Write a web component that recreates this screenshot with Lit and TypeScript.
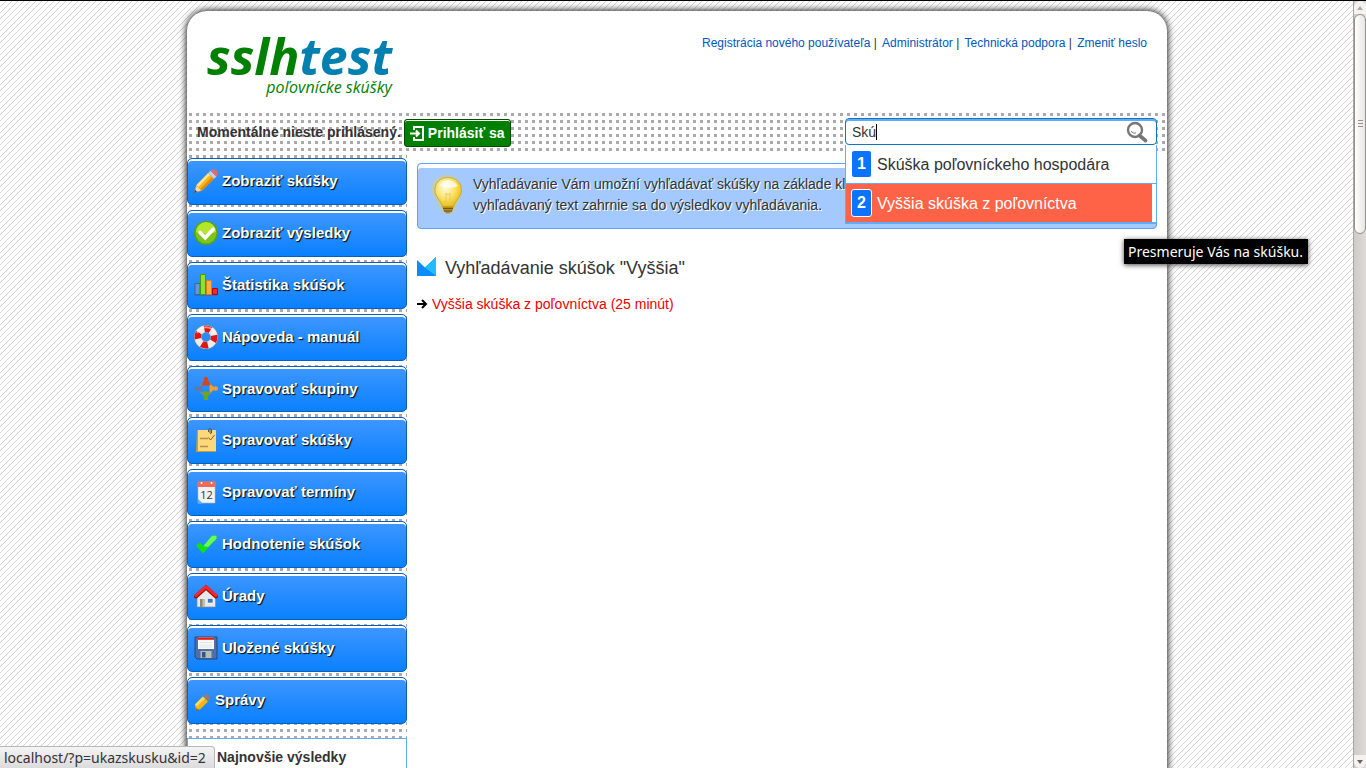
import { LitElement, html, css, svg } from "lit";
import { customElement, state } from "lit/decorators.js";

const icon = (w: number, h: number, body: unknown) =>
  html`<svg width=${w} height=${h} viewBox="0 0 ${w} ${h}" aria-hidden="true">${body}</svg>`;

const pencil = icon(24, 24, svg`
  <path d="M0 24.0 2.500 16 8 21.500z" fill="#f3d9a4" stroke="#a98a55" stroke-width=".6"/>
  <path d="M0 24l1-3.200 2.300 2.200z" fill="#444"/>
  <path d="M2.500 16 14 4.200l6 5.600L8 21.500z" fill="#ffb31a"/>
  <path d="M2.500 16 14 4.200l2 1.800L4.500 18z" fill="#ffe48a"/>
  <path d="M6.300 20 18 8l2 1.800L8 21.500z" fill="#e58a00"/>
  <path d="M14 4.200l2.500-2.400 6 5.600L20 9.800z" fill="#c9ced3"/>
  <path d="M16.500 1.800Q18.500-.5 21 .4q3 1.200 3 4 0 1.400-1.500 3z" fill="#e06a72"/>`);

const check = icon(24, 24, svg`
  <circle cx="12" cy="12" r="12" fill="#55a60a"/>
  <circle cx="12" cy="12" r="10.500" fill="#7cc61c"/>
  <path d="M2 11a10 10 0 0 1 20 0q-10 4-20 0z" fill="#b4e62e"/>
  <path d="M6 11.500l5.200 5.300 8-8.600" fill="none" stroke="#fff" stroke-width="3.600" stroke-linecap="round"/>`);

const bars = icon(24, 24, svg`
  <path d="M0 21.500h24v1H0z" fill="#3c5f99"/>
  <path d="M1 10.500h5v11H1z" fill="#6699cf" stroke="#3465a4"/>
  <path d="M6.500 1.500h5v20h-5z" fill="#8ae234" stroke="#4e9a06"/>
  <path d="M12.500 7.500h5v14h-5z" fill="#fcaf3e" stroke="#e07b1a"/>
  <path d="M18.500 15.500h5v6h-5z" fill="#ef2929" stroke="#b80000"/>`);

const buoy = icon(24, 24, svg`
  <circle cx="12" cy="12" r="8.200" fill="none" stroke="#9aa0a6" stroke-width="7.600"/>
  <circle cx="12" cy="12" r="8.200" fill="none" stroke="#ececec" stroke-width="6.600"/>
  <circle cx="12" cy="12" r="8.200" fill="none" stroke="#dc1616" stroke-width="6.600"
    stroke-dasharray="6.440 6.440" stroke-dashoffset="2"/>
  <path d="M3 8a10 10 0 0 1 18 0" fill="none" stroke="#fff" stroke-opacity=".5" stroke-width="2"/>`);

const people = icon(24, 23, svg`
  <circle cx="12" cy="11.500" r="6" fill="none" stroke="#7a8fb5" stroke-width="2"/>
  <g fill="#d4451c"><circle cx="12" cy="2" r="2.200"/><path d="M9.500 4h5l2 4-2.500.5h-4L7.500 8z"/></g>
  <g fill="#6aa51e"><circle cx="12" cy="21" r="2.200"/><path d="M9.500 19h5l2-4-2.500-.5h-4l-2.500.5z"/></g>
  <g fill="#5a7bb0"><circle cx="2.200" cy="11.500" r="2.200"/><path d="M4 10l4-2.500.5 2.500v3L8 15.500 4 13z"/></g>
  <g fill="#f0a030"><circle cx="21.800" cy="11.500" r="2.200"/><path d="M20 10l-4-2.500-.5 2.500v3l.5 2.500 4-2.500z"/></g>`);

const note = icon(24, 24, svg`
  <path d="M3 2h19v22H2z" fill="#c79a45"/>
  <path d="M4 2h18v21H4z" fill="#fbd978"/>
  <path d="M6 10.500h8M6 18.500h8" stroke="#c08a4a" stroke-width="1.500"/>
  <path d="M14.500 9.500l2 2.500 4-5" fill="none" stroke="#a8552a"/>
  <path d="M14.500 4V1.500q1.500-2 3 0V5q-1 1.500-1.500 0V2" fill="none" stroke="#555"/>`);

const calendar = icon(24, 24, svg`
  <path d="M4 2h17v21H4z" fill="#f2f2f0" stroke="#b9b9b9" stroke-width=".6"/>
  <path d="M4 1.500h17v5.500H4z" fill="#ef6a57"/>
  <circle cx="7.500" cy="3" r="1" fill="#fff"/><circle cx="17.500" cy="3" r="1" fill="#fff"/>
  <path d="M4 19v4.500h5z" fill="#5fb2e8"/>
  <text class="day" x="12.500" y="19" text-anchor="middle">12</text>`);

const tick = icon(24, 24, svg`
  <path d="M2 13.500l4-3 3.500 3.500L18 3.800h4.500v3L9 21.500z" fill="#12e012"/>
  <path d="M9.500 14 18 3.800h4.500v3L14 15z" fill="#66ff55"/>`);

const house = icon(24, 24, svg`
  <path d="M3 11 12 3l9.500 8v12H3z" fill="#e9e9e7" stroke="#8a8a88" stroke-width=".7"/>
  <path d="M6 15h5v8H6z" fill="#8b8b7c"/><path d="M8.500 15H11v8H8.500z" fill="#c0bfae"/>
  <path d="M13.500 14.500h5.500V19h-5.500z" fill="#3f78b8" stroke="#fff" stroke-width=".6"/>
  <path d="M2 12.500 12 3.500l10 9" fill="none" stroke="#a80000" stroke-width="4" stroke-linecap="round"/>
  <path d="M2 11.500 12 2.800l10 8.700" fill="none" stroke="#f02a2a" stroke-width="3" stroke-linecap="round"/>`);

const floppy = icon(24, 24, svg`
  <path d="M1 1h22v22H3l-2-2z" fill="#4e70a8" stroke="#27477d"/>
  <path d="M4 1.500h16V13H4z" fill="#fafafa"/><path d="M4 1.500h16v2.300H4z" fill="#e31b12"/>
  <path d="M5.500 6.500h13M5.500 9h13M5.500 11h13" stroke="#ddd" stroke-width=".8"/>
  <path d="M6.500 15h11v7h-11z" fill="#b9bbb6"/><path d="M8 16h3.500v5.500H8z" fill="#31548f"/>`);

const crayon = icon(17, 24, svg`
  <path d="M1 16.500 9 8.500l5 5-8 8-4.500 1z" fill="#f7b512"/>
  <path d="M1 16.500 9 8.500l2 2-8 8z" fill="#ffda62"/>
  <path d="M1 16.500q0 5 5 5l-4.500 1.500z" fill="#8b6a3a"/>
  <path d="M9 8.500l2.500-2.300q3.500-.7 4.700 3 .3 2-2.200 4.300z" fill="#8c7f80"/>`);

const bulb = icon(32, 42, svg`
  <defs><radialGradient id="glow" cx=".4" cy=".35" r=".7">
    <stop offset="0" stop-color="#fffbe0"/><stop offset=".5" stop-color="#fbe36a"/><stop offset="1" stop-color="#e8b800"/>
  </radialGradient></defs>
  <path d="M16 1C7 1 .5 7 .5 15c0 7 5 10 7 18l4 5h12c2-8 7-13 7-20C30.500 8 25 1 16 1z" fill="#c9cf8c" opacity=".65"/>
  <path d="M17 3.500C9 3.500 4 9 4 16c0 7 6 10 7.500 17h11C24 26 30.500 23 30.500 16c0-7-5.500-12.500-13.500-12.500z" fill="url(#glow)" stroke="#c9a227" stroke-width=".8"/>
  <path d="M8 12q3-6 9-6t10 6q-9 4-19 0z" fill="#fff" opacity=".7"/>
  <path d="M15 31V19l2 2 2-2v12" fill="none" stroke="#e6c870"/>
  <path d="M11.500 32.500h11l-1 4.500-3.500 2.500h-2.500L12.500 37z" fill="#b88d1e"/>
  <path d="M12 34.500h10M13 37h8" stroke="#6b5420"/>`);

interface MenuItem { label: string; art: unknown }

const MENU: MenuItem[] = [
  { label: "Zobraziť skúšky", art: pencil },
  { label: "Zobraziť výsledky", art: check },
  { label: "Štatistika skúšok", art: bars },
  { label: "Nápoveda - manuál", art: buoy },
  { label: "Spravovať skupiny", art: people },
  { label: "Spravovať skúšky", art: note },
  { label: "Spravovať termíny", art: calendar },
  { label: "Hodnotenie skúšok", art: tick },
  { label: "Úrady", art: house },
  { label: "Uložené skúšky", art: floppy },
  { label: "Správy", art: crayon },
];

const LINKS = ["Registrácia nového používateľa", "Administrátor", "Technická podpora", "Zmeniť heslo"];

@customElement("side-menu")
export class SideMenu extends LitElement {
  static styles = css`
    :host { display: block; }
    .list { display: grid; gap: 5px; margin: 0; padding: 0; list-style: none; }
    .item {
      display: flex; align-items: center; gap: 4px; padding: 10px 6px 11px;
      border: 1px solid #0a5fb8; border-radius: 5px;
      background: linear-gradient(#3f97ff, #0a80ff);
      box-shadow: inset 0 2px 0 #fff;
      color: #fff; font-size: 15px; line-height: 20px; font-weight: bold;
      text-decoration: none; text-shadow: 1px 1px 1px #000;
    }
    .day { font: normal 11px "Open Sans", sans-serif; fill: #333; text-shadow: none; }
    svg { display: block; flex: none; }
  `;
  render() {
    return html`<ul class="list">
      ${MENU.map((m) => html`<li><a class="item" href="#">${m.art}<span>${m.label}</span></a></li>`)}
    </ul>`;
  }
}

@customElement("search-box")
export class SearchBox extends LitElement {
  static styles = css`
    :host { display: block; position: relative; }
    .field {
      display: flex; align-items: center; box-sizing: border-box; height: 27px; padding: 0 8px 0 6px;
      border: 1px solid #0b78bf; border-radius: 4px; background: #fff;
      box-shadow: inset 0 2px 0 #62abf8;
    }
    .input {
      flex: 1; min-width: 0; border: 0; padding: 0; outline: 0; background: none; caret-color: transparent;
      font: 14px/20px "Liberation Sans", Arial, sans-serif; color: #333;
    }
    .caret { position: absolute; left: 31px; top: 6px; width: 1px; height: 16px; background: #000; }
    .go { display: block; border: 0; padding: 0; background: none; }
    svg { display: block; }
    .menu {
      position: absolute; top: 100%; left: 0; right: 0; z-index: 2; margin: 0; padding: 0;
      list-style: none; background: #fff; border: solid #62abf8; border-width: 0 1px 2px;
    }
    .row { border-bottom: 1px solid #62abf8; }
    .row:last-child { border-bottom: 0; }
    .hit {
      display: flex; align-items: center; gap: 5px; height: 38px; padding-left: 5px; margin-right: 4px;
      color: #333; font-size: 16px; text-decoration: none;
    }
    .on { background: #ff6347; color: #fff; }
    .num {
      box-sizing: border-box; width: 21px; height: 28px; border: 1px solid #fff; border-radius: 3px;
      background: #0a74ff; color: #fff; font-weight: bold; line-height: 26px; text-align: center;
    }
  `;
  @state() private hits = ["Skúška poľovníckeho hospodára", "Vyššia skúška z poľovníctva"];
  render() {
    return html`
      <div class="field">
        <input class="input" type="text" aria-label="Hľadať" .value=${"Skú"} />
        <span class="caret"></span>
        <button class="go" aria-label="Hľadať">
          <svg width="22" height="22" viewBox="0 0 22 22" fill="none" stroke="#777">
            <path d="M13.500 14.500 19.500 19.500" stroke-width="3.600" stroke-linecap="round"/>
            <circle cx="9" cy="9" r="7" stroke-width="2.400"/>
            <path d="M5 10.500q3 2.500 5 1.500" stroke-width="1"/>
          </svg>
        </button>
      </div>
      <ul class="menu">
        ${this.hits.map((h, i) => html`<li class="row">
          <a class="hit ${i === 1 ? "on" : ""}" href="#"><span class="num">${i + 1}</span><span>${h}</span></a>
        </li>`)}
      </ul>`;
  }
}

@customElement("app-root")
export class AppRoot extends LitElement {
  static styles = css`
    :host {
      display: flex; box-sizing: border-box; height: 100vh; overflow: hidden; position: relative;
      border-top: 1px solid #000; color: #333;
      font: 14px/21px "Liberation Sans", Arial, sans-serif;
    }
    svg { display: block; flex: none; }
    .page {
      flex: 1; padding-top: 10px; overflow: hidden; background-color: #fff;
      background-image: url('data:image/svg+xml,<svg xmlns="http://www.w3.org/2000/svg" width="6" height="6" shape-rendering="crispEdges"><path fill="%23d2d2d2" d="M5 0h1v1h-1zM4 1h1v1h-1zM3 2h1v1h-1zM2 3h1v1h-1zM1 4h1v1h-1zM0 5h1v1h-1z"/></svg>');
    }
    .card {
      box-sizing: border-box; max-width: 980px; min-height: 100vh; margin: 0 auto; padding-top: 22px;
      border-radius: 20px; background: #fff; box-shadow: 0 0 7px 1px #222;
    }
    .head { display: flex; justify-content: space-between; align-items: flex-start; height: 80px; padding: 0 20px; }
    .logo {
      display: grid; font-family: "Open Sans", "Noto Sans", sans-serif; font-style: italic;
      color: #008000; text-decoration: none;
    }
    .word { font-size: 50px; line-height: 46px; font-weight: 700; }
    .blue { color: #0080b0; }
    .sub { font-size: 16px; line-height: 16px; text-align: right; }
    .links { font-size: 12px; line-height: 21px; }
    .links a { color: #0058c0; text-decoration: none; }
    .links a + a { margin-left: 2px; }
    .dots {
      background-color: #fff;
      background-image:
        repeating-linear-gradient(transparent 0 3px, #fff 3px 7px),
        repeating-linear-gradient(90deg, #fff 0 2px, #aaa 2px 5px, #fff 5px 7px);
    }
    .bar {
      display: flex; align-items: flex-start; gap: 3px; box-sizing: border-box; height: 40px;
      padding: 5px 10px 0;
    }
    .who { font-weight: bold; line-height: 29px; }
    .login {
      display: flex; align-items: center; gap: 3px; box-sizing: border-box; height: 28px; margin-top: 1px;
      padding: 0 5px; border: 1px solid #004d00; border-radius: 3px; background: #008000;
      box-shadow: inset 0 1px 0 #fff; color: #fff; font: bold 14px "Liberation Sans", Arial, sans-serif;
    }
    .search { width: 312px; margin-left: auto; }
    .cols { display: grid; grid-template-columns: 220px 1fr; }
    .side { padding-top: 5px; background-position: 0 2px; }
    .news {
      margin: 14px 0 0; padding: 8px 0 20px 29px; border: 1px solid #62abf8; background: #fff;
      font-size: 14px; line-height: 21px;
    }
    .main { padding: 10px 10px 0; }
    .info {
      display: flex; gap: 10px; padding: 10px 13px 12px; border: 1px solid #5ba3ff; border-radius: 4px;
      background: #a3c9ff; box-shadow: inset 0 4px 0 #fff; text-shadow: 1px 1px 0 #fff;
    }
    .info p { margin: 0; }
    .title {
      display: flex; align-items: center; gap: 9px; margin: 28px 0 0;
      font-size: 18px; line-height: 22px; font-weight: normal;
    }
    .found { display: flex; align-items: center; gap: 4px; margin-top: 15px; color: #e00; text-decoration: none; }
    .scroller {
      display: flex; flex-direction: column; width: 12px; box-sizing: border-box;
      background: linear-gradient(90deg, #cfcbc7, #dedbd8); box-shadow: -1px 0 0 #aaa69f;
    }
    .cap { display: grid; place-items: center; height: 13px; background: #f4f3f2; border-radius: 6px 6px 0 0; }
    .low { margin-top: auto; border-radius: 0 0 6px 6px; }
    .thumb {
      display: grid; place-items: center; box-sizing: border-box; height: 220px; border: 1px solid #96918b;
      border-radius: 6px; background: linear-gradient(90deg, #fff, #e8e6e4);
    }
    .tip {
      position: absolute; left: 1124px; top: 238px; z-index: 3; padding: 2px 5px 2px 4px; background: #000; color: #fff;
      box-shadow: 0 1px 5px #444; font: 14px/21px "Noto Sans", sans-serif; white-space: nowrap;
    }
    .status {
      position: absolute; left: 0; bottom: 0; z-index: 3; padding: 0 8px 0 4px; border: solid #b8b8b8; border-width: 1px 1px 0 0;
      border-radius: 0 4px 0 0; background: linear-gradient(#f4f4f4, #dcdcdc); color: #333;
      font: 14px/21px "Noto Sans", sans-serif; white-space: nowrap;
    }
  `;
  render() {
    return html`
      <div class="page">
        <div class="card">
          <header class="head">
            <a class="logo" href="#">
              <span class="word">sslh<span class="blue">test</span></span>
              <span class="sub">poľovnícke skúšky</span>
            </a>
            <nav class="links">${LINKS.map((l, i) => html`${i ? " | " : ""}<a href="#">${l}</a>`)}</nav>
          </header>
          <div class="bar dots">
            <span class="who">Momentálne nieste prihlásený.</span>
            <button class="login">
              <svg width="15" height="15" viewBox="0 0 15 15" fill="none" stroke="#fff" stroke-width="2">
                <path d="M4 4V1h9v13H4v-3M0 7.500h8M6 4.500l3 3-3 3"/>
              </svg>
              Prihlásiť sa
            </button>
            <search-box class="search"></search-box>
          </div>
          <div class="cols">
            <aside class="side dots">
              <side-menu></side-menu>
              <h3 class="news">Najnovšie výsledky</h3>
            </aside>
            <main class="main">
              <div class="info">${bulb}
                <p>Vyhľadávanie Vám umožní vyhľadávať skúšky na základe kľúčových slov. Zadajte<br />vyhľadávaný text zahrnie sa do výsledkov vyhľadávania.</p>
              </div>
              <h2 class="title">
                <svg width="19" height="22" viewBox="0 0 19 22">
                  <path d="M0 3 8 10.500 19 0v19H0z" fill="#0a8cff"/>
                  <path d="M19 0v19L8 10.500z" fill="#1fbcff"/>
                </svg>
                Vyhľadávanie skúšok "Vyššia"
              </h2>
              <a class="found" href="#">
                <svg width="11" height="11" viewBox="0 0 11 11" fill="none" stroke="#000" stroke-width="2">
                  <path d="M0 5h9M5 1l4 4-4 4"/>
                </svg>
                Vyššia skúška z poľovníctva (25 minút)
              </a>
            </main>
          </div>
        </div>
      </div>
      <div class="scroller" aria-hidden="true">
        <div class="cap"><svg width="6" height="4"><path d="M0 4l3-4 3 4z" fill="#aaa"/></svg></div>
        <div class="thumb"><svg width="5" height="8"><path d="M0 .5h5M0 3.500h5M0 6.500h5" stroke="#96918b"/></svg></div>
        <div class="cap low"><svg width="6" height="4"><path d="M0 0l3 4 3-4z" fill="#666"/></svg></div>
      </div>
      <div class="tip" role="tooltip">Presmeruje Vás na skúšku.</div>
      <div class="status">localhost/?p=ukazskusku&amp;id=2</div>`;
  }
}
